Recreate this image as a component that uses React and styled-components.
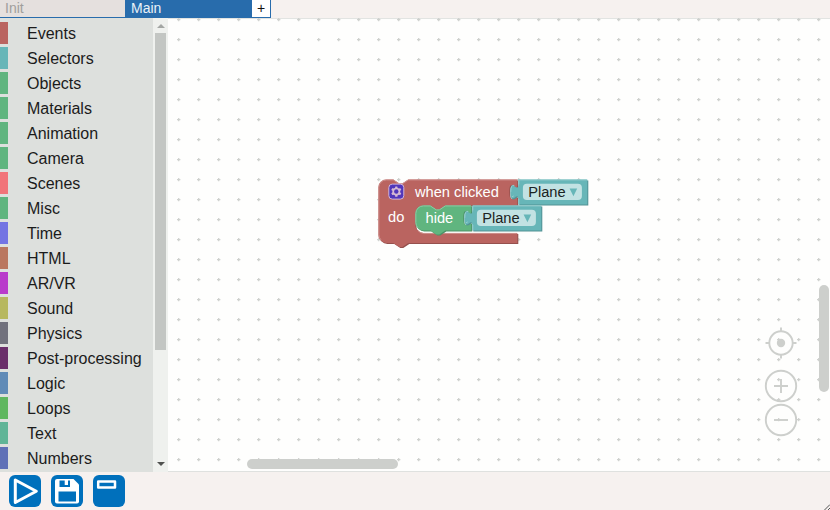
import React from "react";
import styled, { createGlobalStyle } from "styled-components";

const GlobalStyle = createGlobalStyle`
  * { box-sizing: border-box; }
  body { margin: 0; overflow: hidden; font-family: "Liberation Sans", Arial, sans-serif; }
`;

const Page = styled.div`
  width: 830px;
  height: 510px;
  display: flex;
  flex-direction: column;
  background: #f6f1ef;
`;

const TabBar = styled.div`
  display: flex;
  height: 18px;
  flex: none;
`;

const Tab = styled.div`
  width: ${(p) => p.$width}px;
  height: 18px;
  padding-left: ${(p) => (p.$active ? 6 : 5)}px;
  font-size: 14px;
  line-height: 16px;
  color: ${(p) => (p.$active ? "#e9f0f7" : "#a09e9c")};
  background: ${(p) => (p.$active ? "#286cac" : "#e5e0de")};
  border-bottom: 1px solid #286cac;
`;

const AddTab = styled.div`
  width: 19px;
  height: 18px;
  text-align: center;
  font-size: 14px;
  line-height: 16px;
  color: #111;
  background: #fff;
  border-right: 1px solid #286cac;
  border-bottom: 1px solid #286cac;
`;

const Editor = styled.div`
  display: flex;
  flex: none;
  height: 454px;
  overflow: hidden;
`;

const Toolbox = styled.div`
  width: 153px;
  padding-top: 4px;
  background: #dde0dd;
`;

const Category = styled.div`
  height: 22px;
  margin-bottom: 3px;
  padding-left: 19px;
  border-left: 8px solid ${(p) => p.$color};
  font-size: 16px;
  line-height: 23px;
  color: #1b1b1b;
  white-space: nowrap;
`;

const ScrollTrack = styled.div`
  width: 15px;
  display: flex;
  flex-direction: column;
  justify-content: space-between;
  align-items: center;
  padding: 6px 2px 6px;
  background: #eff1ee;
`;

const ScrollThumb = styled.div`
  width: 11px;
  height: 317px;
  margin: 5px 0 auto;
  background: #c3c6c3;
`;

const Arrow = styled.div`
  border: 4px solid transparent;
  ${(p) =>
    p.$up
      ? "border-top: 0; border-bottom-color: #a3a6a3;"
      : "border-bottom: 0; border-top-color: #505250;"}
`;

const Workspace = styled.div`
  position: relative;
  width: 662px;
  background: #fefefd;
  border-top: 1px solid #e2e4e2;
  border-bottom: 1px solid #dfe1df;
`;

const Drawing = styled.svg`
  position: absolute;
  left: 0;
  top: -1px;
  display: block;
`;

const Label = styled.text`
  font: 14.67px "Liberation Sans", Arial, sans-serif;
  fill: ${(p) => (p.$dark ? "#1b2222" : "#fff")};
`;

const CanvasScroll = styled.div`
  position: absolute;
  left: ${(p) => p.$x}px;
  top: ${(p) => p.$y}px;
  width: ${(p) => p.$w}px;
  height: ${(p) => p.$h}px;
  border-radius: 5px;
  background: #cdcfcc;
`;

const Footer = styled.div`
  flex: 1;
  display: flex;
  justify-content: space-between;
  padding: 3px 0 0 9px;
`;

const Actions = styled.div`
  display: flex;
  gap: 10px;
`;

const ActionButton = styled.button`
  width: 32px;
  height: 32px;
  padding: 0;
  border: 0;
  border-radius: 6px;
  background: #0070bc;
  svg { display: block; }
`;

const Grip = styled.svg`
  align-self: flex-end;
`;

const categories = [
  ["Events", "#ba6460"],
  ["Selectors", "#67b6b8"],
  ["Objects", "#60b57f"],
  ["Materials", "#60b57f"],
  ["Animation", "#60b57f"],
  ["Camera", "#60b57f"],
  ["Scenes", "#f17479"],
  ["Misc", "#60b57f"],
  ["Time", "#7374e3"],
  ["HTML", "#ba7760"],
  ["AR/VR", "#b93bcb"],
  ["Sound", "#b7b85f"],
  ["Physics", "#71727d"],
  ["Post-processing", "#6b2f6b"],
  ["Logic", "#608bb7"],
  ["Loops", "#60b760"],
  ["Text", "#60b597"],
  ["Numbers", "#6071b7"],
];

const valuePath =
  "M0,0 H69 V25 H0 V20 c0,-10 -8,8 -8,-7.5 s8,2.5 8,-7.5 Z";

function ValueBlock({ x, y }) {
  return (
    <g transform={`translate(${x},${y})`}>
      <path d={valuePath} transform="translate(1,1)" fill="#529294" />
      <path d={valuePath} fill="#67b6b8" />
      <path
        d="M0.5,24.5 V19.5 M-6.5,17.5 l2,-1 M0.5,5 V0.5 H68.5 M-7.5,12.5 q0,-7.5 3.5,-6.5"
        fill="none"
        stroke="#95cccd"
      />
      <rect x="4.600" y="4.300" width="59" height="16.400" rx="4" fill="#c2e2e3" />
      <Label x="9.900" y="17.400" $dark>Plane</Label>
      <path d="M51.300,9.200 h7.600 l-3.800,7.600 Z" fill="#67b6b8" />
    </g>
  );
}

const eventPath =
  "M0,8 A8,8 0 0 1 8,0 H15 l6,4 h3 l6,-4 H139 V5 c0,10 -8,-8 -8,7.5 s8,-2.500 8,7.500 V26 H67 l-6,4 h-3 l-6,-4 H45 a8,8 0 0 0 -8,8 V45.500 a8,8 0 0 0 8,8 H139 V63.500 H30 l-6,4 h-3 l-6,-4 H8 a8,8 0 0 1 -8,-8 Z";
const hidePath =
  "M0,8 A8,8 0 0 1 8,0 H15 l6,4 h3 l6,-4 H56 V5 c0,10 -8,-8 -8,7.500 s8,-2.500 8,7.500 V25 H30 l-6,4 h-3 l-6,-4 H8 a8,8 0 0 1 -8,-8 Z";

function Gear() {
  return (
    <g transform="translate(10,4.200)">
      <rect x="0.500" y="0.500" width="15" height="15" rx="3.500" fill="#5137bb" stroke="#d0b5d8" />
      <g transform="translate(8,8)" fill="#d5b9d3">
        {[0, 60, 120, 180, 240, 300].map((angle) => (
          <rect key={angle} x="-1.200" y="-5.200" width="2.400" height="2.600" rx="0.500" transform={`rotate(${angle})`} />
        ))}
        <circle r="3.100" fill="none" stroke="#d5b9d3" strokeWidth="1.700" />
      </g>
    </g>
  );
}

function Blocks() {
  return (
    <>
      <g transform="translate(378.300,179.400)">
        <path d={eventPath} transform="translate(1,1)" fill="#95504d" />
        <path d={eventPath} fill="#ba6460" />
        <path
          d="M0.500,55 V8 A7.500,7.500 0 0 1 8,0.500 H15 l6,4 h3 l6,-4 H138.500 M2.700,60.500 A7.500,7.500 0 0 1 0.500,55 M39.500,51 A8,8 0 0 0 45,54 H138.500"
          fill="none"
          stroke="#cf9390"
        />
        <Gear />
        <Label x="36.700" y="17.600">when clicked</Label>
        <Label x="9.700" y="42.600">do</Label>
      </g>
      <g transform="translate(415.300,205.400)">
        <path d={hidePath} transform="translate(1,1)" fill="#4d9166" />
        <path d={hidePath} fill="#60b57f" />
        <path
          d="M2.700,22.500 A7.500,7.500 0 0 1 0.500,17 V8 A7.500,7.500 0 0 1 8,0.500 H15 l6,4 h3 l6,-4 H55.500"
          fill="none"
          stroke="#90cba5"
        />
        <Label x="10.200" y="17.600">hide</Label>
      </g>
      <ValueBlock x={518.3} y={179.4} />
      <ValueBlock x={472.3} y={205.4} />
    </>
  );
}

function WorkspaceDrawing() {
  return (
    <Drawing width="662" height="453" viewBox="168 18 662 453">
      <defs>
        <pattern id="grid" x="168" y="9" width="20" height="20" patternUnits="userSpaceOnUse">
          <path d="M9,10.600 h3.400 M10.700,9 v3.200" stroke="#cfd1ce" strokeWidth="1.250" />
        </pattern>
      </defs>
      <rect x="168" y="18" width="662" height="453" fill="url(#grid)" />
      <Blocks />
      <g fill="none" stroke="#cdcfcc" strokeWidth="1.900">
        <circle cx="781" cy="343" r="11.700" />
        <path d="M781,327.500 v4 M781,354.500 v4 M765.500,343 h4 M792.500,343 h4" />
        <circle cx="781" cy="343" r="4.200" fill="#cdcfcc" stroke="none" />
        <circle cx="781" cy="386" r="15.200" />
        <path d="M774,386 h14 M781,379 v14" />
        <circle cx="781" cy="420" r="15.200" />
        <path d="M774,420 h14" />
      </g>
    </Drawing>
  );
}

function App() {
  return (
    <Page>
      <GlobalStyle />
      <TabBar>
        <Tab $width={125}>Init</Tab>
        <Tab $width={127} $active>Main</Tab>
        <AddTab>+</AddTab>
      </TabBar>
      <Editor>
        <Toolbox>
          {categories.map(([name, color]) => (
            <Category key={name} $color={color}>{name}</Category>
          ))}
        </Toolbox>
        <ScrollTrack>
          <Arrow $up />
          <ScrollThumb />
          <Arrow />
        </ScrollTrack>
        <Workspace>
          <WorkspaceDrawing />
          <CanvasScroll $x={78.5} $y={440} $w={151} $h={10} />
          <CanvasScroll $x={651} $y={266} $w={10} $h={107} />
        </Workspace>
      </Editor>
      <Footer>
        <Actions>
          <ActionButton aria-label="Run">
            <svg width="32" height="32" fill="none" stroke="#fff" strokeWidth="3" strokeLinejoin="round">
              <path d="M6.300,5 V27.500 L27.300,16.300 Z" />
            </svg>
          </ActionButton>
          <ActionButton aria-label="Save">
            <svg width="32" height="32">
              <path d="M6,4 H22.500 L28,9.500 V26.500 Q28,28.500 26,28.500 H6 Q4,28.500 4,26.500 V6 Q4,4 6,4 Z" fill="#fff" />
              <path d="M8.500,5.500 V12 H19 V5.500 H17 V10 H13.700 V5.500 Z M7.500,16.500 H25 V26.500 H7.500 Z" fill="#0070bc" />
            </svg>
          </ActionButton>
          <ActionButton aria-label="Panel">
            <svg width="32" height="32" fill="none" stroke="#fff" strokeWidth="2.500" strokeLinejoin="round">
              <rect x="5.200" y="6.400" width="16.800" height="6" />
            </svg>
          </ActionButton>
        </Actions>
        <Grip width="6" height="6" stroke="#555" strokeWidth="1">
          <path d="M0.500,6 L6,0.500 M4,6 L6,4" />
        </Grip>
      </Footer>
    </Page>
  );
}

export default App;
